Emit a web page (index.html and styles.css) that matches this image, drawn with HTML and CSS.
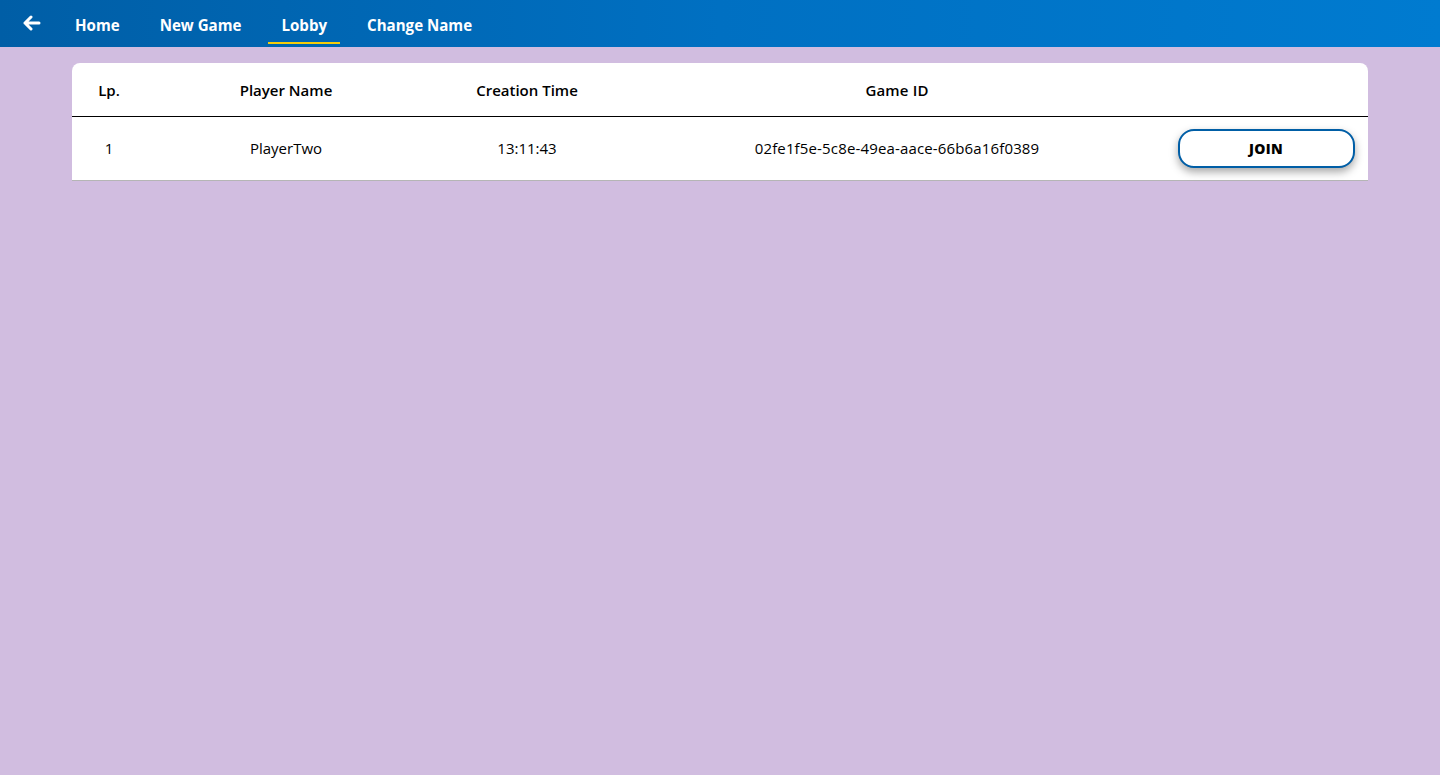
FILE: index.html
```html
<!DOCTYPE html>
<html>
<head>
<meta charset="utf-8">
<link rel="stylesheet" href="styles.css">
</head>
<body>
<nav class="nav">
  <span class="back">
    <svg width="18" height="16" viewBox="0 0 18 16"><path d="M8 2 L2 8 L8 14 M2 8 H16" fill="none" stroke="#fff" stroke-width="3" stroke-linecap="round" stroke-linejoin="round"/></svg>
  </span>
  <a class="link">Home</a>
  <a class="link">New Game</a>
  <a class="link active">Lobby</a>
  <a class="link">Change Name</a>
</nav>
<main class="main">
  <div class="card">
    <div class="row head">
      <div class="c1">Lp.</div>
      <div class="c2">Player Name</div>
      <div class="c3">Creation Time</div>
      <div class="c4">Game ID</div>
      <div class="c5"></div>
    </div>
    <div class="row body">
      <div class="c1">1</div>
      <div class="c2">PlayerTwo</div>
      <div class="c3">13:11:43</div>
      <div class="c4">02fe1f5e-5c8e-49ea-aace-66b6a16f0389</div>
      <div class="c5"><button class="join">JOIN</button></div>
    </div>
  </div>
</main>
</body>
</html>
```
FILE: styles.css
```css
html, body {
  margin: 0;
  padding: 0;
}
body {
  background: #d1bde0;
  font-family: "Open Sans", "Noto Sans", sans-serif;
  color: #000;
  min-height: 775px;
}
.nav {
  height: 47px;
  background: linear-gradient(90deg, #005ea6 0%, #0070c2 50%, #007bd0 100%);
  display: flex;
  align-items: stretch;
  padding-left: 23px;
  box-sizing: border-box;
}
.back {
  display: flex;
  align-items: center;
  margin-right: 21px;
  padding-bottom: 1px;
}
.link {
  color: #fff;
  font-weight: 700;
  font-size: 15.1px;
  display: flex;
  align-items: center;
  padding: 2px 13px 0;
  margin-right: 14px;
  position: relative;
}
.link.active::after {
  content: "";
  position: absolute;
  left: 0;
  right: 0;
  bottom: 3px;
  height: 2px;
  background: #f5cd0a;
}
.main {
  padding: 16px 72px;
}
.card {
  background: #fff;
  border-radius: 8px 8px 0 0;
  box-shadow: 0 1px 0 #b5b5b5;
}
.row {
  display: grid;
  grid-template-columns: 74px 280px 202px 538px 202px;
  align-items: center;
  text-align: center;
}
.head {
  height: 54px;
  border-bottom: 1px solid #000;
  font-weight: 600;
  font-size: 15px;
  padding-top: 1px;
  box-sizing: border-box;
}
.body {
  height: 63px;
  font-size: 15px;
  padding-bottom: 2px;
  box-sizing: border-box;
}
.c4 { letter-spacing: 0.15px; }
.join {
  width: 177px;
  height: 39px;
  border: 2px solid #005ea6;
  border-radius: 16px;
  background: #fff;
  font-family: "Open Sans", sans-serif;
  font-weight: 800;
  font-size: 14px;
  letter-spacing: 0.3px;
  box-shadow: 0 4px 8px rgba(0,0,0,0.35);
  margin-right: 2px;
  margin-top: 1px;
}
```
